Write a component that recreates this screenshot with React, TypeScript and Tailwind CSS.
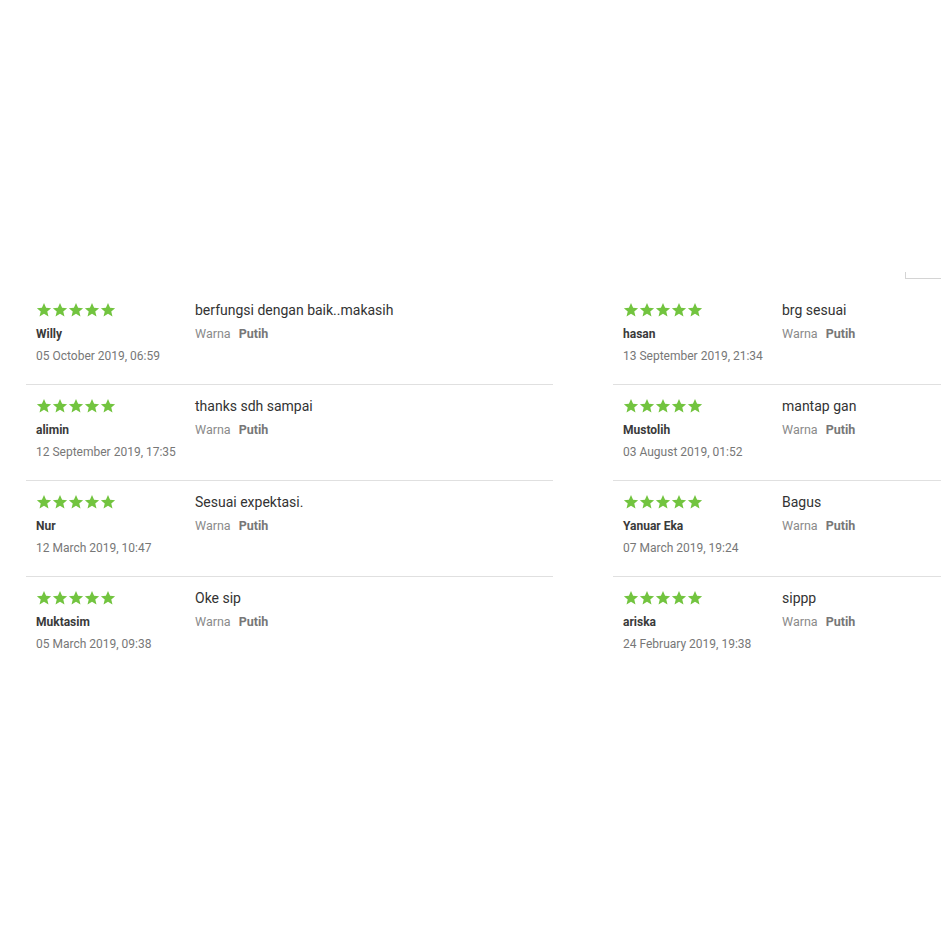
import React from "react";

type Review = { name: string; date: string; text: string };

const left: Review[] = [
  { name: "Willy", date: "05 October 2019, 06:59", text: "berfungsi dengan baik..makasih" },
  { name: "alimin", date: "12 September 2019, 17:35", text: "thanks sdh sampai" },
  { name: "Nur", date: "12 March 2019, 10:47", text: "Sesuai expektasi." },
  { name: "Muktasim", date: "05 March 2019, 09:38", text: "Oke sip" },
];

const right: Review[] = [
  { name: "hasan", date: "13 September 2019, 21:34", text: "brg sesuai" },
  { name: "Mustolih", date: "03 August 2019, 01:52", text: "mantap gan" },
  { name: "Yanuar Eka", date: "07 March 2019, 19:24", text: "Bagus" },
  { name: "ariska", date: "24 February 2019, 19:38", text: "sippp" },
];

function Star() {
  return (
    <svg width="16" height="16" viewBox="0 0 24 24" className="shrink-0">
      <path
        d="M12 1.5l3.1 7.1 7.6.6-5.8 5 1.8 7.5L12 17.8l-6.7 3.9 1.8-7.5-5.8-5 7.6-.6z"
        fill="#72c43f"
      />
    </svg>
  );
}

function Row({ r, last }: { r: Review; last: boolean }) {
  return (
    <div className={`flex h-[96px] pt-[13px] pl-[10px] ${last ? "" : "border-b border-[#e0e0e0]"}`}>
      <div className="w-[159px] shrink-0 flex flex-col">
        <div className="flex h-[16px]">
          <Star />
          <Star />
          <Star />
          <Star />
          <Star />
        </div>
        <div className="mt-[8px] text-[12px] leading-[16px] font-bold text-[#3a3a3a]">{r.name}</div>
        <div className="mt-[6px] text-[12px] leading-[16px] text-[#777]">{r.date}</div>
      </div>
      <div className="flex flex-col">
        <div className="text-[14px] leading-[18px] text-[#333] -mt-[1px]">{r.text}</div>
        <div className="mt-[7px] text-[12.5px] leading-[16px] text-[#8a8a8a]">
          Warna <span className="ml-[5px] font-bold text-[#777]">Putih</span>
        </div>
      </div>
    </div>
  );
}

function Panel({ items }: { items: Review[] }) {
  return (
    <div className="w-[527px] shrink-0 flex flex-col">
      {items.map((r, i) => (
        <Row key={i} r={r} last={i === items.length - 1} />
      ))}
    </div>
  );
}

export default function App() {
  return (
    <div
      className="w-[941px] h-[941px] bg-white overflow-hidden flex flex-col"
      style={{ fontFamily: "Roboto, 'Liberation Sans', sans-serif" }}
    >
      <div className="h-[272px]" />
      <div className="flex justify-end">
        <div className="w-[36px] h-[7px] border-l border-b border-[#d4d4d4]" />
      </div>
      <div className="h-[10px]" />
      <div className="flex pl-[26px] gap-[60px]">
        <Panel items={left} />
        <Panel items={right} />
      </div>
    </div>
  );
}
